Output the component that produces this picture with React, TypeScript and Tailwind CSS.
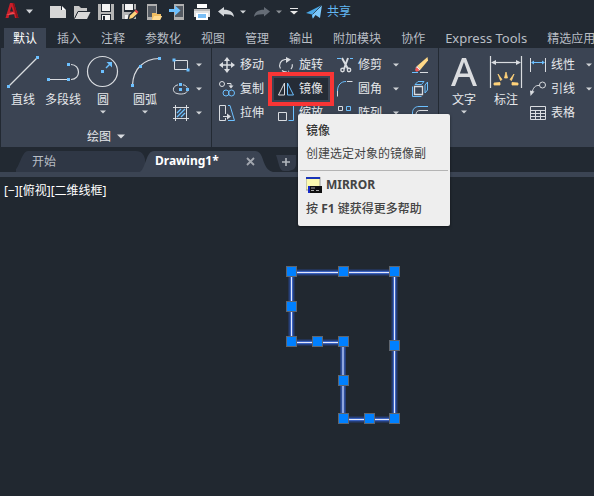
import type { ReactNode } from "react";

const WHITE = "#d9dce0";
const BLUE = "#6cc0ff";

type Dot = [number, number];

function Dots({ at }: { at: Dot[] }) {
  return (
    <>
      {at.map(([x, y]) => (
        <rect key={`${x}-${y}`} x={x - 1.5} y={y - 1.5} width="3" height="3" fill={BLUE} stroke="none" />
      ))}
    </>
  );
}

function Caret({ className = "" }: { className?: string }) {
  return (
    <svg viewBox="0 0 6 4" className={`h-[4px] w-[6px] shrink-0 ${className}`} aria-hidden="true">
      <path d="M0 .5h6L3 3.5z" fill="#d0d3d7" />
    </svg>
  );
}

function Glyph({ children }: { children: ReactNode }) {
  return (
    <svg viewBox="0 0 16 16" className="h-4 w-4 shrink-0 overflow-visible" fill="none" stroke={WHITE} strokeWidth="1" aria-hidden="true">
      {children}
    </svg>
  );
}

function BigTool({ label, icon, caret = false }: { label: string; icon: ReactNode; caret?: boolean }) {
  return (
    <button type="button" className="flex w-10 shrink-0 flex-col items-center whitespace-nowrap">
      <svg viewBox="0 0 40 36" className="h-9 w-10 overflow-visible" fill="none" stroke={WHITE} strokeWidth="1.2" aria-hidden="true">
        {icon}
      </svg>
      <span className="leading-5">{label}</span>
      {caret && <Caret />}
    </button>
  );
}

function RowTool({ label, icon, caret = false }: { label: string; icon: ReactNode; caret?: boolean }) {
  return (
    <button type="button" className="flex h-6 items-center gap-[5px] whitespace-nowrap">
      <Glyph>{icon}</Glyph>
      <span className="leading-[18px]">{label}</span>
      {caret && <Caret className="ml-[6px]" />}
    </button>
  );
}

function IconTool({ label, icon, caret = false }: { label: string; icon: ReactNode; caret?: boolean }) {
  return (
    <button type="button" aria-label={label} className="flex h-6 items-center gap-[7px]">
      <Glyph>{icon}</Glyph>
      {caret && <Caret />}
    </button>
  );
}

function Quick({ label, children }: { label: string; children: ReactNode }) {
  return (
    <button type="button" aria-label={label} className="flex h-6 w-6 shrink-0 items-center justify-center">
      <svg viewBox="0 0 18 18" className="h-[18px] w-[18px]" aria-hidden="true">
        {children}
      </svg>
    </button>
  );
}

function SmallDrop({ label, dim = false }: { label: string; dim?: boolean }) {
  return (
    <button type="button" aria-label={label} className={`flex h-6 w-[10px] shrink-0 items-center justify-center ${dim ? "opacity-60" : ""}`}>
      <Caret />
    </button>
  );
}

function TitleBar() {
  return (
    <header className="flex h-[28px] items-start overflow-hidden">
      <button type="button" aria-label="AutoCAD" className="flex h-[22px] w-6 shrink-0 items-center justify-center">
        <svg viewBox="0 0 14 18" className="h-[18px] w-[14px]" aria-hidden="true">
          <path d="M5 1h4l4.500 15h-3.500L9 12H4.500L3.500 16H.5z" fill="#c91f2a" />
          <path d="M6.500 4.500L5 9.500h3.200z" fill="#222932" />
          <path d="M9 1l4.500 15h-2L7.500 1z" fill="#8e1219" />
          <path d="M1 13l7-3 2 2-6.500 1z" fill="#ef4a50" />
        </svg>
      </button>
      <button type="button" aria-label="应用程序菜单" className="flex h-[22px] w-[10px] shrink-0 items-center justify-center">
        <svg viewBox="0 0 7 5" className="h-[5px] w-[7px]" aria-hidden="true">
          <path d="M0 .5h7L3.500 4.500z" fill="#d0d3d7" />
        </svg>
      </button>
      <div className="ml-3 flex h-[23px] items-center">
        <Quick label="新建">
          <path d="M1 3h11v4h5v8H1z" fill="#d6d6d6" />
          <path d="M13 3l4 4h-4z" fill="#fff" />
        </Quick>
        <Quick label="打开">
          <path d="M1 16V3h5l2 2h6v3H6z" fill="#c8c8c8" />
          <path d="M5 9h12.500L14 16H1.500z" fill="#d9d9d9" />
          <path d="M1.500 15.500L5 8.500h12" stroke="#222932" fill="none" />
        </Quick>
        <Quick label="保存">
          <path d="M1 1h16v16H1z" fill="#b5b5b5" />
          <path d="M4 1h10v8H4zM4 11h10v6H4z" fill="#222932" />
          <path d="M5 1h8v7H5zM5 12h8v5H5z" fill="#f4f4f4" />
          <path d="M6 13h2v4H6z" fill="#222932" />
        </Quick>
        <Quick label="另存为">
          <path d="M1 1h14v15H1z" fill="#b5b5b5" />
          <path d="M3 1h10v8H3z" fill="#222932" />
          <path d="M4 1h8v6H4zM4 12h5v4H4z" fill="#f4f4f4" />
          <path d="M6.500 17l1-5L14 6l4 4-6.500 7z" fill="#222932" />
          <path d="M8 16l1-3.500 5-4.500 2.500 2.500-5 4.500z" fill="#ffd27a" />
          <path d="M13.500 8L15 6.500 17.500 9 16 10.500z" fill="#f04848" />
        </Quick>
        <Quick label="从 Web 和 Mobile 中打开">
          <path d="M2 1h10v16H2z" fill="#b0b0b0" />
          <path d="M3 3h8v11H3z" fill="#555b63" />
          <path d="M7 16v-6h4l1 1h4v2h1l-2 4H7z" fill="#f0bd62" />
          <path d="M9 13h8l-2 4H7z" fill="#ffda91" />
        </Quick>
        <Quick label="保存到 Web 和 Mobile">
          <path d="M5 1h10v16H5z" fill="#b0b0b0" />
          <path d="M6 3h8v11H6z" fill="#555b63" />
          <path d="M0 6h6V2.500L11.500 7.500 6 12.500V9H0z" fill="#6cc0ff" />
        </Quick>
        <Quick label="打印">
          <path d="M4 1h10v4H4z" fill="#fff" />
          <path d="M1 6h16v8H1z" fill="#e2e2e2" />
          <path d="M1 6h16v2H1z" fill="#bdbdbd" />
          <path d="M3 10h12v7H3z" fill="#fff" />
          <path d="M5 11h8v4H5z" fill="#78bdf5" />
        </Quick>
        <Quick label="放弃">
          <path d="M1 8.500L7 4v2.800c6 0 9.500 2 10 7.200-2-2.500-5-3-10-2.800V13.500z" fill="#d3d6da" />
        </Quick>
        <SmallDrop label="放弃列表" />
        <div className="ml-[2px] flex">
          <Quick label="重做">
            <path d="M17 8.500L11 4v2.800C5 6.800 1.500 8.800 1 14c2-2.500 5-3 10-2.800V13.500z" fill="#656c76" />
          </Quick>
        </div>
        <SmallDrop label="重做列表" dim />
        <button type="button" aria-label="自定义快速访问工具栏" className="ml-[5px] flex h-6 w-[10px] items-center justify-center">
          <svg viewBox="0 0 8 7" className="h-[7px] w-[8px]" aria-hidden="true">
            <path d="M0 0h8v1H0zM0 3h8L4 6.500z" fill="#e6e6e6" />
          </svg>
        </button>
        <button type="button" className="ml-[7px] flex items-center gap-[5px] whitespace-nowrap text-[#62b8f4]">
          <svg viewBox="0 0 16 16" className="h-4 w-4" aria-hidden="true">
            <path d="M0 9L16 1 8.500 9 6 15V10.500z" fill="#4aa8e8" />
            <path d="M16 1L14 14 9.500 11 7 14.500 6.500 10.500z" fill="#7cc8fb" />
            <path d="M16 1L6.500 10.500" stroke="#222932" strokeWidth=".7" />
          </svg>
          <span className="leading-[18px]">共享</span>
        </button>
      </div>
    </header>
  );
}

const MENUS = ["默认", "插入", "注释", "参数化", "视图", "管理", "输出", "附加模块", "协作", "Express Tools", "精选应用"];

function MenuTabs() {
  return (
    <nav className="flex h-5 overflow-hidden pl-[3px] text-[#b9bec5]">
      {MENUS.map((name, i) => (
        <button
          key={name}
          type="button"
          className={`mx-px h-5 shrink-0 px-[9px] leading-[21px] whitespace-nowrap ${i === 0 ? "bg-[#3b4453] text-white" : ""} ${name === "Express Tools" ? "text-[13px]" : ""}`}
        >
          {name}
        </button>
      ))}
    </nav>
  );
}

function DrawPanel() {
  return (
    <section className="w-[210px] shrink-0">
      <div className="flex h-[78px] pt-[6px] pl-[2px]">
        <BigTool
          label="直线"
          icon={
            <>
              <path d="M5.500 32.500l29-29" />
              <Dots at={[[5.5, 32.5], [34.5, 3.5]]} />
            </>
          }
        />
        <BigTool
          label="多段线"
          icon={
            <>
              <path d="M5.500 25.500h20M28 10.500c10 0 10 15 0 15" />
              <Dots at={[[5.5, 25.5], [25.5, 25.5], [25.5, 10.5]]} />
            </>
          }
        />
        <BigTool
          label="圆"
          caret
          icon={
            <>
              <circle cx="19.500" cy="17.500" r="15" />
              <path d="M23 14l4-4" stroke={BLUE} strokeWidth="1.500" />
              <path d="M29 8v5.500L23.500 8z" fill={BLUE} stroke="none" />
              <Dots at={[[19.5, 17.5]]} />
            </>
          }
        />
        <div className="ml-[2px]">
          <BigTool
            label="圆弧"
            caret
            icon={
              <>
                <path d="M7.500 31.500C8 15 18 5 34.500 4.500" />
                <Dots at={[[7.5, 31.5], [15.5, 12.5], [34.5, 4.5]]} />
              </>
            }
          />
        </div>
        <div className="-mt-px ml-2">
          <IconTool
            label="矩形"
            caret
            icon={
              <>
                <path d="M1.500 3.500h13v9h-13z" />
                <Dots at={[[1, 3], [15, 13]]} />
              </>
            }
          />
          <IconTool
            label="椭圆"
            caret
            icon={
              <>
                <path d="M5 3.800C-1 5-1 11.500 4 12.500c2.500.8 6 .7 8-.2 1-.5 2-1.300 2.300-2M10 3.800c2 .4 3.500 1.200 4.200 2.700" />
                <Dots at={[[7.5, 3.5], [7.5, 8.5], [14.5, 8.5]]} />
              </>
            }
          />
          <IconTool
            label="图案填充"
            caret
            icon={
              <>
                <path d="M4 8l4-4M4 12l8-8M8 12l4-4" stroke={BLUE} strokeWidth="1.300" />
                <path d="M2.500 0v16M13.500 0v16M0 2.500h16M0 13.500h16" />
              </>
            }
          />
        </div>
      </div>
      <button type="button" className="mx-auto flex h-[21px] items-center gap-[6px] leading-5">
        绘图
        <svg viewBox="0 0 8 5" className="h-[5px] w-[8px]" aria-hidden="true">
          <path d="M0 .5h8L4 4.500z" fill="#d9dce0" />
        </svg>
      </button>
    </section>
  );
}

function MirrorTool() {
  return (
    <div className="relative -ml-[4px] flex h-6 w-[54px] items-center">
      <button
        type="button"
        aria-describedby="mirror-tip"
        className="flex h-[22px] w-full items-center gap-[5px] bg-[#252c36] pl-[4px] whitespace-nowrap"
      >
        <Glyph>
          <path d="M6.500 2v12h-6z" />
          <path d="M9.500 2v12h6z" stroke={BLUE} />
        </Glyph>
        <span className="leading-[18px]">镜像</span>
      </button>
      <div className="pointer-events-none absolute -inset-x-[6px] -inset-y-[5px] z-10 border-[4px] border-[#f93535]" />
      <div
        id="mirror-tip"
        role="tooltip"
        className="absolute top-[37px] left-[24px] z-20 w-[152px] rounded-[2px] bg-[#eeeeee] whitespace-nowrap text-[#444] shadow-[0_1px_3px_rgba(0,0,0,0.5)]"
      >
        <div className="h-[56px] px-2 pt-[5px]">
          <p className="leading-[23px] font-medium text-[#333]">镜像</p>
          <p className="leading-[23px]">创建选定对象的镜像副</p>
        </div>
        <div className="mx-[2px] h-[56px] border-t border-[#b4b4b4] px-[6px] pt-[2px] font-bold">
          <p className="flex h-6 items-center gap-1">
            <svg viewBox="0 0 16 16" className="h-4 w-4" aria-hidden="true">
              <path d="M0 0h14v13H0z" fill="#fdfbb0" stroke="#9a9a9a" />
              <path d="M0 0h14v2H0z" fill="#1a35b8" />
              <path d="M2 9h14v7H2z" fill="#111" />
              <path d="M2 9h2v7H2z" fill="#1428c8" />
              <path d="M5 11h4M5 13.500h3M10 13.500h3" stroke="#aaa" />
            </svg>
            MIRROR
          </p>
          <p className="leading-6">
            <span className="font-medium">按</span> F1 <span className="font-medium">键获得更多帮助</span>
          </p>
        </div>
      </div>
    </div>
  );
}

function ModifyPanel() {
  return (
    <section className="flex w-[227px] shrink-0 border-l border-[#232a33] pt-[5px] pl-[7px]">
      <div className="w-[59px]">
        <RowTool
          label="移动"
          icon={
            <>
              <path d="M8 2v12M2 8h12" strokeWidth="1.500" />
              <path d="M8 0l3 4H5zM8 16l3-4H5zM0 8l4-3v6zM16 8l-4-3v6z" fill={WHITE} stroke="none" />
            </>
          }
        />
        <RowTool
          label="复制"
          icon={
            <>
              <circle cx="3" cy="3" r="2.500" />
              <path d="M8 2.500h4v3" />
              <path d="M9.500 4.500h5L12 7.500z" fill={WHITE} stroke="none" />
              <circle cx="7" cy="12" r="3" stroke={BLUE} />
              <circle cx="12.500" cy="12" r="3" stroke={BLUE} />
            </>
          }
        />
        <RowTool
          label="拉伸"
          icon={
            <>
              <path d="M6.500 9V.5h-6v15h6V13" />
              <path d="M9 .5h2l4.500 15H9" stroke={BLUE} />
              <path d="M4 11.500h5" />
              <path d="M8 8.500l4 3-4 3z" fill={WHITE} stroke="none" />
            </>
          }
        />
      </div>
      <div className="w-[59px]">
        <RowTool
          label="旋转"
          icon={
            <>
              <path d="M10 2.500H7a6 6 0 0 0-4.500 9" strokeWidth="1.200" />
              <path d="M4 13.500a6 6 0 0 0 7 .5M13 12a6 6 0 0 0 1-6" strokeWidth="1.200" strokeDasharray="5 1.500" />
              <path d="M8 0l5 2.500L8 6z" fill={WHITE} stroke="none" />
            </>
          }
        />
        <MirrorTool />
        <RowTool
          label="缩放"
          icon={
            <>
              <path d="M0 .5h15.500v15h-5" stroke={BLUE} />
              <path d="M.5 7.500h8v8h-8z" />
            </>
          }
        />
      </div>
      <div className="w-[75px]">
        <RowTool
          label="修剪"
          caret
          icon={
            <>
              <path d="M0 1.500h4M13 1.500h3" stroke={BLUE} />
              <path d="M5 1l6 11M11 1L7 12" strokeWidth="2" />
              <circle cx="5.500" cy="13" r="1.700" strokeWidth="1.400" />
              <circle cx="12" cy="13" r="1.700" strokeWidth="1.400" />
            </>
          }
        />
        <RowTool
          label="圆角"
          caret
          icon={
            <>
              <path d="M.5 10C.5 4 4 .5 9 .5" stroke={BLUE} />
              <path d="M10 .5h5.500M.5 10v5.500" />
            </>
          }
        />
        <RowTool
          label="阵列"
          caret
          icon={
            <>
              <path d="M1.500 1.500h4v4h-4zM1.500 10.500h4v4h-4z" />
              <path d="M9.500 1.500h4v4h-4zM9.500 10.500h4v4h-4z" stroke={BLUE} />
            </>
          }
        />
      </div>
      <div>
        <IconTool
          label="删除"
          icon={
            <>
              <path d="M0 15.500h6" stroke={BLUE} />
              <path d="M8 15.500h8" />
              <path d="M5 9L15.500 0 16 3.500 8.500 12.500z" fill="#ffd887" stroke="none" />
              <path d="M5 9l3.500 3.500-2 1.500-3-3z" fill="#fff" stroke="none" />
              <path d="M4.500 10l3 3-2 1.500H4L3 13z" fill="#f25858" stroke="none" />
            </>
          }
        />
        <IconTool
          label="分解"
          icon={
            <>
              <path d="M3 3.500L6 .5h6L9.500 3.500zM13 4l2.500-3v8L13 12zM.5 5.500v10h9" stroke={BLUE} />
              <path d="M2.500 5.500h8v8h-8z" strokeWidth="1.300" />
            </>
          }
        />
        <IconTool
          label="偏移"
          icon={
            <>
              <path d="M16 1.500H7C3 1.500.5 4 .5 8v8" stroke={BLUE} />
              <path d="M16 5.500H8c-2.500 0-4 1.500-4 4V14h12" />
            </>
          }
        />
      </div>
    </section>
  );
}

function AnnotatePanel() {
  return (
    <section className="flex flex-1 border-l border-[#232a33] pl-[5px]">
      <div className="flex pt-[6px]">
        <BigTool
          label="文字"
          caret
          icon={<path d="M7 32L18 4h4l11 28h-4l-3.500-9h-11L11 32zM15.800 19.500h8.400L20 8z" fill="#dadcdf" stroke="none" />}
        />
        <div className="ml-[2px]">
          <BigTool
            label="标注"
            icon={
              <>
                <path d="M4.500 2v32M35.500 2v32" />
                <path d="M7 8.500h26" />
                <path d="M5 8.500l5-2.500v5zM35 8.500L30 6v5z" fill={WHITE} stroke="none" />
                <path
                  d="M20 18l1.500 6h-3zM12 20l4 5.500-1.500 1zM28 20l-4 5.500 1.500 1zM8 29l6-.5V31H8zM32 29l-6-.5V31h6z"
                  fill="#ffd27a"
                  stroke="#ffd27a"
                  strokeWidth=".8"
                />
              </>
            }
          />
        </div>
      </div>
      <div className="ml-1 pt-[5px]">
        <RowTool
          label="线性"
          caret
          icon={
            <>
              <path d="M.5 1v14M15.500 1v14" />
              <path d="M2 5.500h12" stroke={BLUE} />
              <path d="M1 5.500L4 3.500v4zM15 5.500l-3-2v4z" fill={BLUE} stroke="none" />
            </>
          }
        />
        <RowTool
          label="引线"
          caret
          icon={
            <>
              <circle cx="12.500" cy="4" r="3" />
              <path d="M9.500 4.500C5 4 3 7 2 12" />
              <path d="M0 9.500l4.500 1L.5 15z" fill={WHITE} stroke="none" />
            </>
          }
        />
        <RowTool
          label="表格"
          icon={<path d="M.5 1.500h15v13H.5zM.5 5.500h15M.5 8.500h15M.5 11.500h15M5.500 5.500v9M10.500 5.500v9" />}
        />
      </div>
    </section>
  );
}

function FileTabs() {
  return (
    <div className="mt-[3px] flex h-[27px] border-b-[5px] border-[#3b4453] pl-[16px]">
      <button type="button" className="relative h-[22px] w-[129px] shrink-0 pl-4 text-left text-[#b9bec5]">
        <svg viewBox="0 0 129 22" className="absolute inset-0 h-full w-full" preserveAspectRatio="none" aria-hidden="true">
          <path d="M-4 22C4 20 5 1 12 1H120c6 0 8 4 9 8v13z" fill="#2f3745" />
        </svg>
        <span className="relative leading-6">开始</span>
      </button>
      <div className="relative flex h-[22px] w-[126px] shrink-0 items-center pl-[10px]">
        <svg viewBox="0 0 126 22" className="absolute inset-0 h-full w-full overflow-visible" preserveAspectRatio="none" aria-hidden="true">
          <path d="M-5 22C1 18 1 1 9 1H110c10 0 6 18 18 21z" fill="#3b4453" />
        </svg>
        <button type="button" className="relative leading-6 font-bold text-white">
          Drawing1*
        </button>
        <button type="button" aria-label="关闭" className="relative ml-auto mr-[16px]">
          <svg viewBox="0 0 9 9" className="h-[9px] w-[9px]" aria-hidden="true">
            <path d="M1 1l7 7M8 1L1 8" stroke="#a2a7af" strokeWidth="1.800" />
          </svg>
        </button>
      </div>
      <button type="button" aria-label="新图形" className="relative ml-[4px] flex h-[22px] w-[22px] items-center justify-center">
        <svg viewBox="0 0 22 22" className="h-[22px] w-[22px]" aria-hidden="true">
          <path d="M1 5h20v9c0 5-4 7-9 7H9c-5 0-5-8-8-16z" fill="#343c4a" />
          <path d="M11 8v8M7 12h8" stroke="#b3b8bf" strokeWidth="1.600" />
        </svg>
      </button>
    </div>
  );
}

const GRIPS: Dot[] = [
  [291, 94], [343, 94], [394, 94], [291, 129], [291, 164], [317, 164],
  [343, 164], [394, 168], [343, 203], [343, 241], [369, 241], [394, 241],
];

function Canvas() {
  const outline = "M291.5 95.500H394.500V242.500H343V165.500H291.500z";
  return (
    <main className="relative flex-1 overflow-hidden bg-[#212830]">
      <p className="pt-1 pl-1 leading-5 text-white">[−][俯视][二维线框]</p>
      <svg className="absolute top-0 left-0 h-full w-full" fill="none" role="img" aria-label="图形">
        <path d={outline} stroke="#263f78" strokeWidth="6" />
        <path d={outline} stroke="#3a62c0" strokeWidth="3" />
        <path d={outline} stroke="#e2e8fb" strokeWidth="1" />
        {GRIPS.map(([x, y]) => (
          <rect key={`${x}-${y}`} x={x - 4.5} y={y - 4.5} width="10" height="10" fill="#0080ff" stroke="#5f6670" />
        ))}
      </svg>
    </main>
  );
}

export default function App() {
  return (
    <div className="flex min-h-screen flex-col overflow-hidden bg-[#222932] font-['Noto_Sans','Noto_Sans_CJK_SC',sans-serif] text-[12px] leading-4 text-[#e6e8eb]">
      <TitleBar />
      <MenuTabs />
      <div className="relative z-10 ml-px flex h-[99px] bg-[#3b4453]">
        <DrawPanel />
        <ModifyPanel />
        <AnnotatePanel />
      </div>
      <FileTabs />
      <Canvas />
    </div>
  );
}
